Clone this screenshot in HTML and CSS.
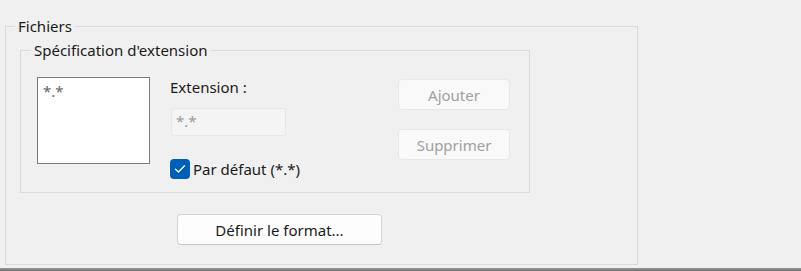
FILE: index.html
```html
<!DOCTYPE html>
<html lang="fr">
<head>
  <meta charset="UTF-8" />
  <title>Fichiers</title>
  <link rel="stylesheet" href="styles.css">
</head>
<body>
  <!-- Group: Fichiers -->
  <fieldset class="group outer">
    <legend>Fichiers</legend>

    <!-- Group: extension spec -->
    <fieldset class="group inner">
      <legend>Spécification d'extension</legend>
      <div class="spec-row">
        <div class="listbox">
          <div class="list-item">*.*</div>
        </div>
        <div class="spec-fields">
          <div class="field-label">Extension :</div>
          <div class="textbox disabled">*.*</div>
          <label class="check-row">
            <span class="checkbox">
              <svg width="12" height="10" viewBox="0 0 12 10">
                <path d="M1.5 5.2 L4.5 8 L10.5 1.8" fill="none" stroke="#fff" stroke-width="1.3" stroke-linecap="round" stroke-linejoin="round"/>
              </svg>
            </span>
            Par défaut (*.*)
          </label>
        </div>
        <div class="spec-buttons">
          <button class="btn" disabled>Ajouter</button>
          <button class="btn" disabled>Supprimer</button>
        </div>
      </div>
    </fieldset>

    <button class="btn format-btn">Définir le format...</button>
  </fieldset>

  <!-- bottom window edge -->
  <div class="window-edge"></div>
</body>
</html>
```

FILE: styles.css
```css
/* Global styles */
html, body {
  height: 100%;
}
body {
  margin: 0;
  background: #f0f0f0;
  color: #1a1a1a;
  font-family: "Noto Sans", "Open Sans", sans-serif;
  font-size: 15px;
  line-height: 20px;
  overflow: hidden;
  display: flex;
  flex-direction: column;
}

/* Group boxes */
.group {
  border: 1px solid #dadada;
  margin: 0;
  min-width: 0;
}
.group legend {
  padding: 0 3px;
  line-height: 20px;
}
.outer {
  width: 633px;
  box-sizing: border-box;
  margin: 16px 0 0 5px;
  padding: 4px 14px 19px 14px;
}
.outer > legend {
  margin-left: -5px;
}
.inner {
  width: 510px;
  box-sizing: border-box;
  padding: 17px 16px 13px 16px;
}
.inner > legend {
  margin-left: -6px;
}

/* Extension row */
.spec-row {
  display: flex;
  align-items: flex-start;
}
.listbox {
  width: 113px;
  height: 87px;
  box-sizing: border-box;
  background: #fff;
  border: 1px solid #7a7a7a;
  padding: 3px 5px;
}
.list-item {
  color: #666;
}
.spec-fields {
  width: 228px;
  margin-left: 20px;
  display: flex;
  flex-direction: column;
}
.textbox {
  width: 115px;
  height: 28px;
  box-sizing: border-box;
  margin: 11px 0 0 1px;
  padding: 2px 4px;
  border: 1px solid #e6e6e6;
  border-radius: 3px;
  background: #f4f4f4;
}
.textbox.disabled {
  color: #9a9a9a;
}
.check-row {
  display: flex;
  align-items: center;
  gap: 3px;
  margin-top: 23px;
  height: 20px;
}
.checkbox {
  width: 20px;
  height: 20px;
  box-sizing: border-box;
  border-radius: 4px;
  background: #005fb8;
  display: flex;
  align-items: center;
  justify-content: center;
}

/* Buttons */
.btn {
  font-family: inherit;
  font-size: 15px;
  color: #1a1a1a;
  background: #fdfdfd;
  border: 1px solid #d4d4d4;
  border-bottom-color: #c4c4c4;
  border-radius: 4px;
  padding: 0;
  height: 31px;
}
.btn:disabled {
  color: #a0a0a0;
  background: #f9f9f9;
  border-color: #e8e8e8;
}
.spec-buttons {
  display: flex;
  flex-direction: column;
  gap: 19px;
  padding-top: 2px;
}
.spec-buttons .btn {
  width: 112px;
}
.format-btn {
  display: block;
  width: 205px;
  margin: 21px 0 0 157px;
}

/* Bottom edge of the dialog */
.window-edge {
  margin-top: auto;
  height: 3px;
  background: linear-gradient(#9a9a9a, #6e6e6e);
}
```
